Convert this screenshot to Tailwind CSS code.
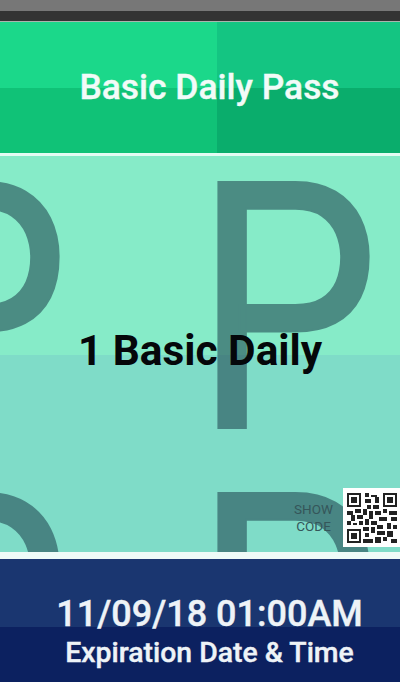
<!DOCTYPE html>
<html lang="en">
<head>
  <meta charset="UTF-8">
  <title>Basic Daily Pass</title>
  <script src="https://cdn.jsdelivr.net/npm/@tailwindcss/browser@4"></script>
</head>
<body class="w-[400px] h-[682px] overflow-hidden flex flex-col bg-white font-['Roboto',sans-serif]">

  <!-- Status bar strip -->
  <div class="h-[11px] bg-[#777777]"></div>
  <div class="h-[10px] bg-[#333333]"></div>
  <div class="h-[1px] bg-[#a9b5ae]"></div>

  <!-- Pass title -->
  <header class="relative h-[131px] pl-[19px] flex items-center justify-center">
    <div class="absolute inset-0 grid grid-cols-[217px_1fr] grid-rows-[66px_1fr]">
      <div class="bg-[#1bd88a]"></div>
      <div class="bg-[#14c582]"></div>
      <div class="bg-[#10c277]"></div>
      <div class="bg-[#0aad6c]"></div>
    </div>
    <h1 class="relative text-[35.4px] leading-[42px] mb-[1px] font-medium [-webkit-text-stroke:0.4px] text-[#f2fbf8] whitespace-nowrap">Basic Daily Pass</h1>
  </header>

  <div class="h-[3px] bg-[#e4fbf3]"></div>

  <!-- Ticket body -->
  <main class="relative h-[396px] overflow-hidden flex items-center justify-center">
    <div class="absolute inset-0 grid grid-rows-[199px_1fr]">
      <div class="bg-[#86ebc8]"></div>
      <div class="bg-[#7fdcc8]"></div>
    </div>
    <!-- Watermark letters -->
    <span class="absolute left-[194px] top-[-46px] origin-left scale-x-[.85] text-[346px] leading-[400px] [-webkit-text-stroke:2px] text-[#1c3f4c] opacity-55">P</span>
    <span class="absolute left-[-116px] top-[-46px] origin-left scale-x-[.85] text-[346px] leading-[400px] [-webkit-text-stroke:2px] text-[#1c3f4c] opacity-55">P</span>
    <span class="absolute left-[194px] top-[265px] origin-left scale-x-[.85] text-[346px] leading-[400px] [-webkit-text-stroke:2px] text-[#1c3f4c] opacity-55">P</span>
    <span class="absolute left-[-116px] top-[265px] origin-left scale-x-[.85] text-[346px] leading-[400px] [-webkit-text-stroke:2px] text-[#1c3f4c] opacity-55">P</span>

    <p class="relative mb-[6px] text-[42.4px] leading-[50px] font-bold text-[#05070a] whitespace-nowrap">1 Basic Daily</p>

    <!-- Show code -->
    <div class="absolute right-0 bottom-[5px] flex items-center gap-[10px]">
      <span class="text-[13.5px] leading-[17px] text-center text-[#35565a]">SHOW<br>CODE</span>
      <div class="w-[57px] h-[59px] bg-white flex items-center justify-center">
        <svg width="50" height="50" viewBox="0 0 25 25" fill="#222222">
          <path d="M0 0h7v7H0zM1 1v5h5V1zM2 2h3v3H2zM18 0h7v7h-7zM19 1v5h5V1zM20 2h3v3h-3zM0 18h7v7H0zM1 19v5h5v-5zM2 20h3v3H2z" fill-rule="evenodd"/>
          <path d="M9 0h2v2H9zM12 1h3v1h-3zM14 2h2v3h-2zM9 3h3v2H9zM10 6h2v2h-2zM13 6h3v2h-3zM8 8h2v3H8zM0 9h3v2H0zM4 8h3v2H4zM2 11h2v3H2zM5 11h3v2H5zM0 14h2v2H0zM6 14h2v2H6zM3 15h2v1H3zM11 9h2v4h-2zM14 9h3v2h-3zM18 8h2v2h-2zM21 9h4v2h-4zM16 12h4v2h-4zM22 12h3v2h-3zM9 13h2v3H9zM12 14h3v2h-3zM8 17h3v2H8zM12 17h2v3h-2zM15 16h3v2h-3zM20 15h2v3h-2zM23 16h2v2h-2zM9 20h2v2H9zM15 19h4v2h-4zM20 19h3v3h-3zM8 23h5v2H8zM14 22h3v3h-3zM18 22h2v2h-2zM22 23h3v2h-3z"/>
        </svg>
      </div>
    </div>
  </main>

  <div class="h-[7px] bg-[#eefbf8]"></div>

  <!-- Expiration -->
  <footer class="relative flex-1 pl-[19px] flex flex-col items-center">
    <div class="absolute inset-0 grid grid-rows-[68px_1fr]">
      <div class="bg-[#1a3670]"></div>
      <div class="bg-[#0c2160]"></div>
    </div>
    <p class="relative mt-[34px] text-[36px] leading-[42px] font-medium [-webkit-text-stroke:0.4px] text-[#eef3f7] whitespace-nowrap">11/09/18 01:00AM</p>
    <p class="relative text-[28.4px] leading-[36px] font-medium [-webkit-text-stroke:0.4px] text-[#eef3f7] whitespace-nowrap">Expiration Date &amp; Time</p>
  </footer>
</body>
</html>
